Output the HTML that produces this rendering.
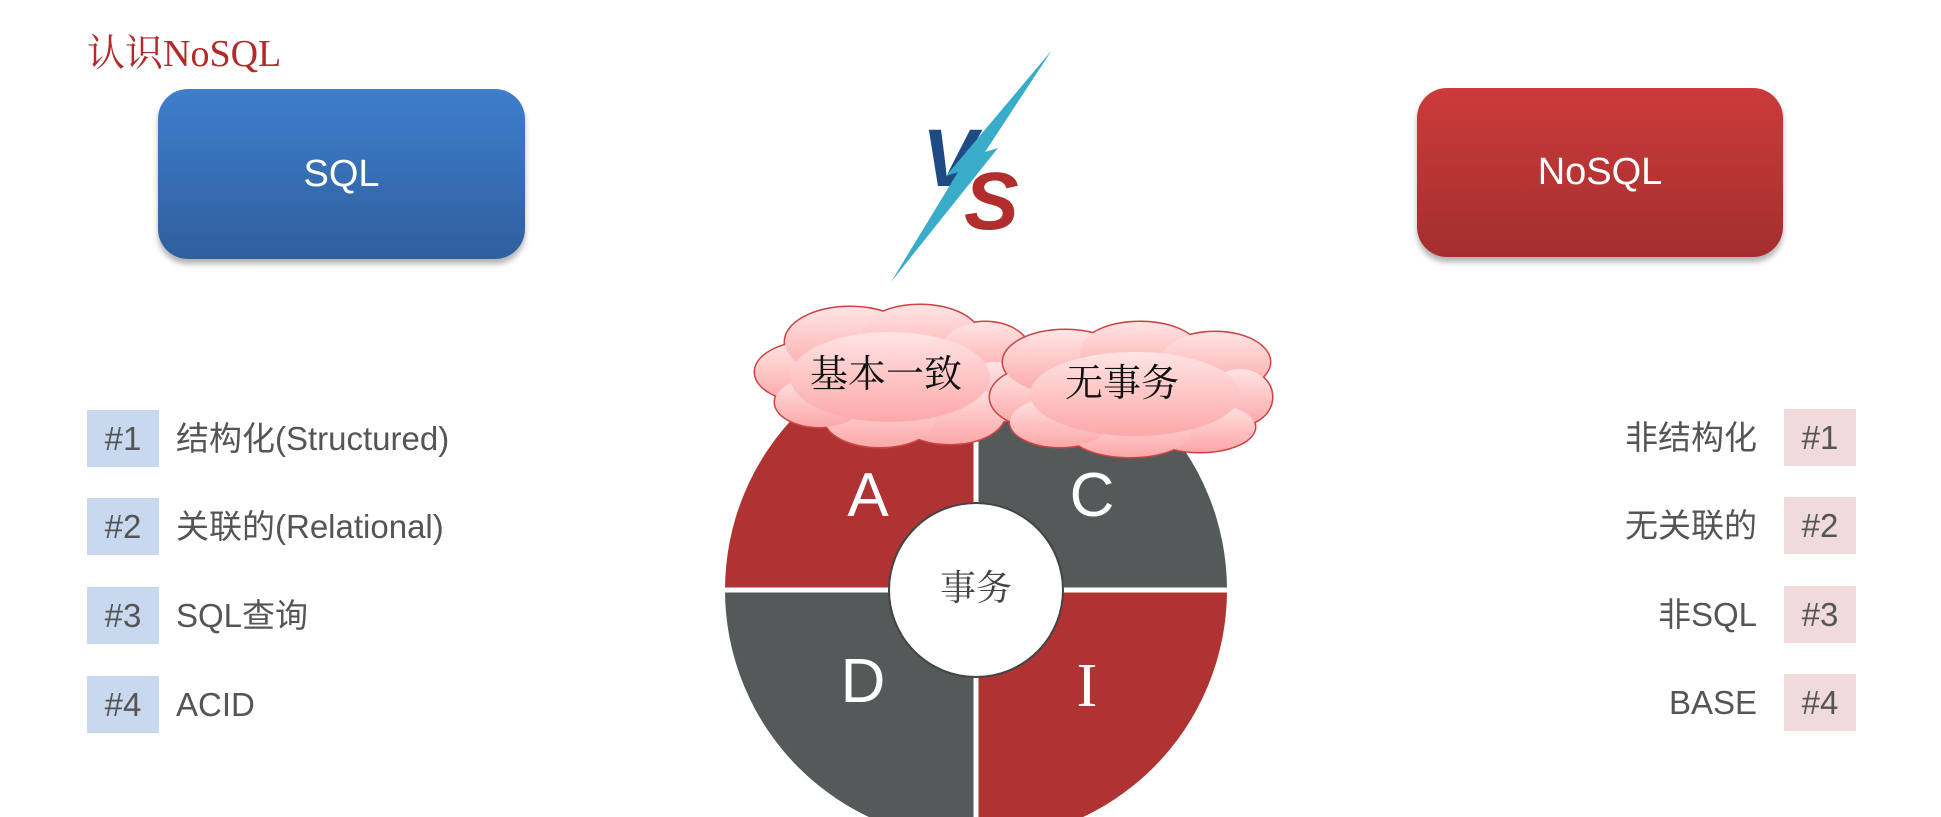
<!DOCTYPE html>
<html><head><meta charset="utf-8"><style>
body{margin:0;width:1941px;height:817px;background:#fff;overflow:hidden;position:relative;font-family:"Liberation Sans","Noto Sans CJK SC",sans-serif;}
.abs{position:absolute}
.title{left:87px;top:22px;font-family:"Liberation Serif","Noto Serif CJK SC",serif;font-size:38px;color:#b22a2a;}
.box{position:absolute;border-radius:30px;color:#fff;font-size:38px;display:flex;align-items:center;justify-content:center;box-shadow:0 5px 6px rgba(0,0,0,.3);}
.sql{left:158px;top:89px;width:367px;height:170px;background:linear-gradient(#3e7ecb,#2f5f9e);}
.nosql{left:1417px;top:88px;width:366px;height:169px;background:linear-gradient(#cc3b3b,#a42e2e);}
.badge{position:absolute;width:72px;height:57px;font-size:33px;color:#555;display:flex;align-items:center;justify-content:center;}
.bl{left:87px;background:#c7d8ef}
.br{left:1784px;background:#f0dadb}
.lt{position:absolute;left:176px;font-size:33px;color:#555;height:57px;line-height:57px;white-space:nowrap}
.rt{position:absolute;right:184px;font-size:33px;color:#555;height:57px;line-height:57px;white-space:nowrap;text-align:right}
</style></head><body>
<div class="abs title">认识NoSQL</div>
<div class="box sql">SQL</div>
<div class="box nosql">NoSQL</div>

<div class="badge bl" style="top:410px">#1</div><div class="lt" style="top:410px">结构化(Structured)</div>
<div class="badge bl" style="top:498px">#2</div><div class="lt" style="top:498px">关联的(Relational)</div>
<div class="badge bl" style="top:587px">#3</div><div class="lt" style="top:587px">SQL查询</div>
<div class="badge bl" style="top:676px">#4</div><div class="lt" style="top:676px">ACID</div>

<div class="badge br" style="top:409px">#1</div><div class="rt" style="top:409px">非结构化</div>
<div class="badge br" style="top:497px">#2</div><div class="rt" style="top:497px">无关联的</div>
<div class="badge br" style="top:586px">#3</div><div class="rt" style="top:586px">非SQL</div>
<div class="badge br" style="top:674px">#4</div><div class="rt" style="top:674px">BASE</div>

<svg class="abs" style="left:0;top:0" width="1941" height="817" viewBox="0 0 1941 817">
<defs>
<linearGradient id="cg" x1="0" y1="0" x2="0" y2="1"><stop offset="0" stop-color="#ffe4e4"/><stop offset="1" stop-color="#fca8a8"/></linearGradient>
</defs>
<!-- V -->
<text x="922" y="186" font-family="Liberation Sans" font-weight="bold" font-style="italic" font-size="82" fill="#1f4b85">V</text>
<!-- lightning -->
<polygon points="1052,50 985,152 998,148 891,282 958,172 946,176" fill="#38acc9"/>
<text x="964" y="229" font-family="Liberation Sans" font-weight="bold" font-style="italic" font-size="82" fill="#b22e2e">S</text>
<!-- ACID circle -->
<g>
<path d="M976,590 L725,590 A251,251 0 0 1 976,339 Z" fill="#b03333"/>
<path d="M976,590 L976,339 A251,251 0 0 1 1227,590 Z" fill="#535a59"/>
<path d="M976,590 L1227,590 A251,251 0 0 1 976,841 Z" fill="#b03333"/>
<path d="M976,590 L976,841 A251,251 0 0 1 725,590 Z" fill="#535a59"/>
<line x1="720" y1="590" x2="1232" y2="590" stroke="#fff" stroke-width="5"/>
<line x1="976" y1="330" x2="976" y2="817" stroke="#fff" stroke-width="5"/>
<circle cx="976" cy="590" r="87" fill="#fff" stroke="#444" stroke-width="2"/>
<text x="976" y="600" text-anchor="middle" font-family="Noto Serif CJK SC,serif" font-size="36" fill="#444">事务</text>
<g font-family="Liberation Sans" font-size="62" fill="#fff" text-anchor="middle">
<text x="868" y="516">A</text><text x="1092" y="516">C</text><text x="863" y="702">D</text><text x="1087" y="706" font-family="Liberation Serif">I</text>
</g>
</g>
<!-- cloud 1 -->
<g stroke="#c44" stroke-width="3">
<ellipse cx="810" cy="372" rx="55" ry="30"/><ellipse cx="850" cy="342" rx="65" ry="35"/><ellipse cx="920" cy="337" rx="60" ry="32"/><ellipse cx="985" cy="352" rx="45" ry="30"/><ellipse cx="995" cy="392" rx="40" ry="30"/><ellipse cx="950" cy="414" rx="55" ry="30"/><ellipse cx="880" cy="419" rx="55" ry="28"/><ellipse cx="820" cy="402" rx="45" ry="25"/>
</g>
<g fill="url(#cg)">
<ellipse cx="810" cy="372" rx="55" ry="30"/><ellipse cx="850" cy="342" rx="65" ry="35"/><ellipse cx="920" cy="337" rx="60" ry="32"/><ellipse cx="985" cy="352" rx="45" ry="30"/><ellipse cx="995" cy="392" rx="40" ry="30"/><ellipse cx="950" cy="414" rx="55" ry="30"/><ellipse cx="880" cy="419" rx="55" ry="28"/><ellipse cx="820" cy="402" rx="45" ry="25"/><ellipse cx="890" cy="377" rx="100" ry="45"/>
</g>
<text x="886" y="387" text-anchor="middle" font-family="Noto Serif CJK SC,serif" font-size="38" fill="#111">基本一致</text>
<!-- cloud 2 -->
<g stroke="#c44" stroke-width="3">
<ellipse cx="1040" cy="397" rx="50" ry="30"/><ellipse cx="1065" cy="362" rx="62" ry="32"/><ellipse cx="1140" cy="352" rx="60" ry="30"/><ellipse cx="1215" cy="362" rx="55" ry="30"/><ellipse cx="1240" cy="397" rx="32" ry="28"/><ellipse cx="1200" cy="427" rx="55" ry="25"/><ellipse cx="1130" cy="432" rx="60" ry="25"/><ellipse cx="1060" cy="422" rx="50" ry="25"/>
</g>
<g fill="url(#cg)">
<ellipse cx="1040" cy="397" rx="50" ry="30"/><ellipse cx="1065" cy="362" rx="62" ry="32"/><ellipse cx="1140" cy="352" rx="60" ry="30"/><ellipse cx="1215" cy="362" rx="55" ry="30"/><ellipse cx="1240" cy="397" rx="32" ry="28"/><ellipse cx="1200" cy="427" rx="55" ry="25"/><ellipse cx="1130" cy="432" rx="60" ry="25"/><ellipse cx="1060" cy="422" rx="50" ry="25"/><ellipse cx="1135" cy="394" rx="105" ry="42"/>
</g>
<text x="1122" y="396" text-anchor="middle" font-family="Noto Serif CJK SC,serif" font-size="38" fill="#111">无事务</text>
</svg>
</body></html>
